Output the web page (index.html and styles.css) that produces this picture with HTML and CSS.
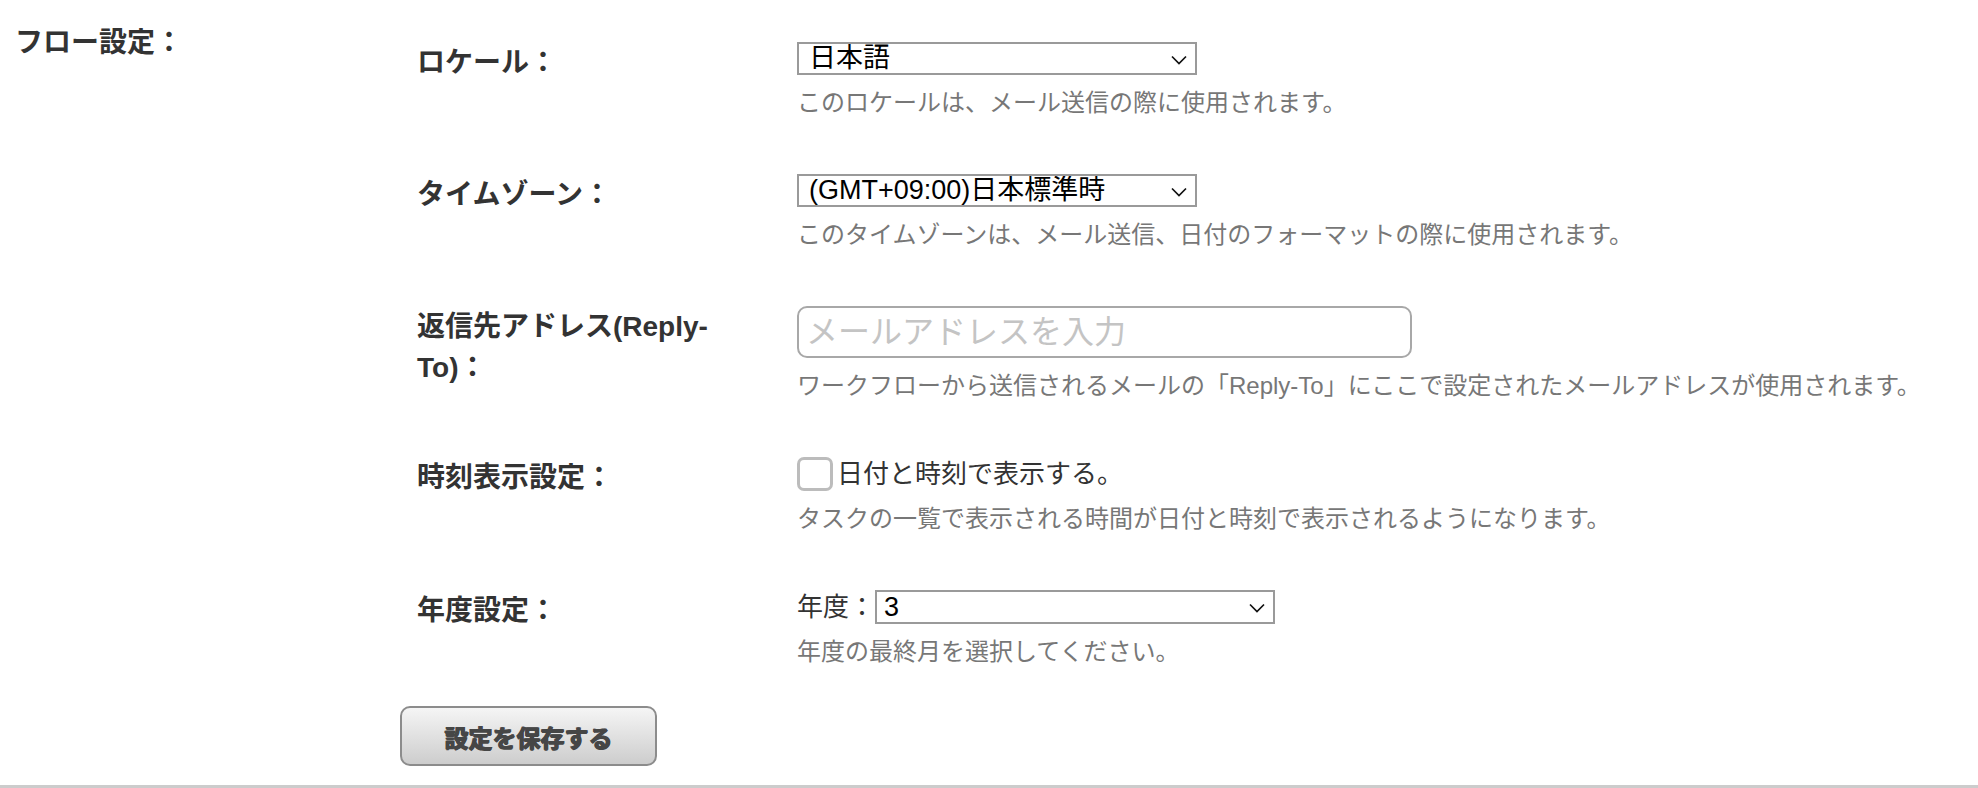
FILE: index.html
```html
<!DOCTYPE html>
<html lang="ja">
<head>
<meta charset="utf-8">
<title>フロー設定</title>
<link rel="stylesheet" href="styles.css">
</head>
<body>
<div class="page">
  <div class="section">
    <div class="section-title">フロー設定：</div>
    <div class="form">
      <div class="row">
        <div class="label">ロケール：</div>
        <div class="field">
          <span class="select-wrap">
            <select class="select"><option>日本語</option></select>
            <svg class="chevron" viewBox="0 0 16 10" width="16" height="10"><path d="M1 1.5 L8 8.5 L15 1.5" fill="none" stroke="#111" stroke-width="1.7"/></svg>
          </span>
          <p class="help">このロケールは、メール送信の際に使用されます。</p>
        </div>
      </div>
      <div class="row">
        <div class="label">タイムゾーン：</div>
        <div class="field">
          <span class="select-wrap">
            <select class="select"><option>(GMT+09:00)日本標準時</option></select>
            <svg class="chevron" viewBox="0 0 16 10" width="16" height="10"><path d="M1 1.5 L8 8.5 L15 1.5" fill="none" stroke="#111" stroke-width="1.7"/></svg>
          </span>
          <p class="help">このタイムゾーンは、メール送信、日付のフォーマットの際に使用されます。</p>
        </div>
      </div>
      <div class="row">
        <div class="label">返信先アドレス(Reply-To)：</div>
        <div class="field">
          <input class="text-input" type="text" placeholder="メールアドレスを入力">
          <p class="help">ワークフローから送信されるメールの「Reply-To」にここで設定されたメールアドレスが使用されます。</p>
        </div>
      </div>
      <div class="row">
        <div class="label">時刻表示設定：</div>
        <div class="field">
          <label class="check-line"><span class="checkbox"></span><span class="check-text">日付と時刻で表示する。</span></label>
          <p class="help">タスクの一覧で表示される時間が日付と時刻で表示されるようになります。</p>
        </div>
      </div>
      <div class="row">
        <div class="label">年度設定：</div>
        <div class="field">
          <div class="inline-line">
            <span class="inline-label">年度：</span>
            <span class="select-wrap">
              <select class="select select-year"><option>3</option></select>
              <svg class="chevron" viewBox="0 0 16 10" width="16" height="10"><path d="M1 1.5 L8 8.5 L15 1.5" fill="none" stroke="#111" stroke-width="1.7"/></svg>
            </span>
          </div>
          <p class="help">年度の最終月を選択してください。</p>
        </div>
      </div>
      <button class="save" type="button">設定を保存する</button>
    </div>
  </div>
</div>
</body>
</html>
```
FILE: styles.css
```css
* { box-sizing: border-box; }
html, body { margin: 0; padding: 0; background: #fff; }
body {
  font-family: "Liberation Sans", "Noto Sans CJK JP", sans-serif;
  color: #333;
}
.page {
  height: 788px;
  border-bottom: 3px solid #cccccc;
  overflow: hidden;
}
.section {
  display: flex;
}
.section-title {
  width: 400px;
  padding: 22px 0 0 15px;
  font-size: 28px;
  line-height: 41px;
  font-weight: bold;
  color: #333;
}
.form {
  padding-top: 42px;
  display: flex;
  flex-direction: column;
  align-items: flex-start;
}
.row {
  display: flex;
  margin-bottom: 53px;
}
.label {
  width: 397px;
  padding: 0 40px 0 17px;
  font-size: 28px;
  line-height: 41px;
  font-weight: bold;
  color: #333;
}
.field {
  display: flex;
  flex-direction: column;
  align-items: flex-start;
}
.select-wrap {
  position: relative;
  display: inline-block;
}
.select {
  -webkit-appearance: none;
  appearance: none;
  width: 400px;
  height: 33px;
  margin: 0;
  padding: 0 30px 0 10px;
  border: 2px solid #9a9a9a;
  border-radius: 0;
  background: #fff;
  color: #000;
  font-family: "Liberation Sans", "Noto Sans CJK JP", sans-serif;
  font-size: 27px;
  line-height: 29px;
}
.select-year {
  height: 34px;
  padding-left: 7px;
}
.chevron {
  position: absolute;
  right: 10px;
  top: 50%;
  margin-top: -4px;
  pointer-events: none;
}
.help {
  margin: 10px 0 0;
  font-size: 24px;
  line-height: 36px;
  color: #777;
}
.text-input {
  width: 615px;
  height: 52px;
  margin: 0;
  padding: 0 7px;
  border: 2px solid #a8a8a8;
  border-radius: 10px;
  font-family: "Liberation Sans", "Noto Sans CJK JP", sans-serif;
  font-size: 32px;
  color: #333;
  background: #fff;
  outline: none;
}
.text-input::placeholder { color: #c4c4c4; }
.check-line {
  display: flex;
  align-items: center;
  height: 34px;
}
.checkbox {
  width: 36px;
  height: 34px;
  border: 3px solid #bcbcbc;
  border-radius: 7px;
  background: #fff;
}
.check-text {
  margin-left: 4px;
  font-size: 26px;
  line-height: 34px;
  color: #333;
}
.inline-line {
  display: flex;
  align-items: center;
}
.inline-label {
  font-size: 26px;
  line-height: 34px;
  color: #333;
  width: 78px;
}
.save {
  margin: -17px 0 0 0;
  width: 257px;
  height: 60px;
  border: 2px solid #8c8c8c;
  border-radius: 10px;
  background: linear-gradient(#f5f5f5, #cdcdcd);
  font-family: "Liberation Sans", "Noto Sans CJK JP", sans-serif;
  font-size: 24px;
  font-weight: bold;
  color: #464646;
  text-shadow: 0.8px 0 0 #464646, -0.8px 0 0 #464646, 0 0.8px 0 #464646;
  padding: 0;
}
```
